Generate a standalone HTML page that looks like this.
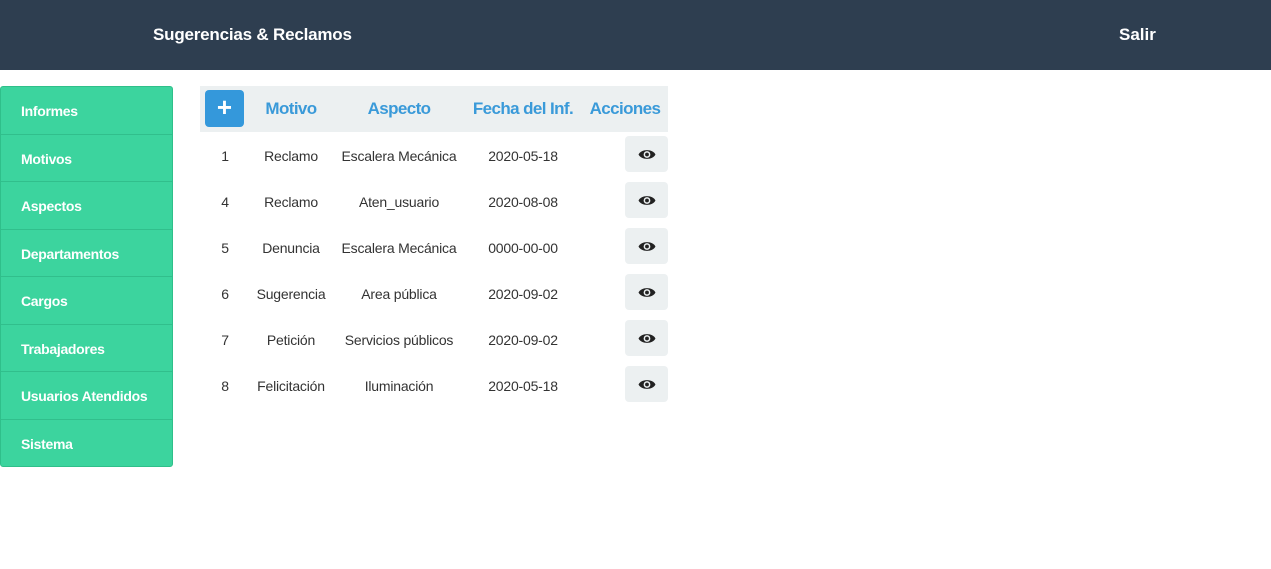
<!DOCTYPE html>
<html><head><style>
*{margin:0;padding:0;box-sizing:border-box}
body{width:1271px;height:569px;background:#fff;font-family:"Liberation Sans",sans-serif;position:relative;overflow:hidden}
.top{position:absolute;left:0;top:0;width:1271px;height:70px;background:#2e3e50;color:#fff;font-weight:bold;font-size:17px}
.top .t{position:absolute;left:153px;top:25px;letter-spacing:-0.2px}
.top .s{position:absolute;left:1119px;top:25px}
.side{position:absolute;left:0;top:86px;width:173px;height:381px;background:#3cd49e;border:1px solid #2fbf8a;border-radius:3px}
.side div{height:47.5px;border-bottom:1px solid #31bf8c;color:#fff;font-weight:bold;font-size:14px;padding-left:20px;line-height:48px;letter-spacing:-0.3px;white-space:nowrap}
.side div:last-child{border-bottom:none}
.tbl{position:absolute;left:200px;top:86px;width:468px}
.row{position:relative;height:46px}
.hd{background:#ecf0f1;height:46px}
.c{position:absolute;top:1px;height:46px;line-height:46px;text-align:center;font-size:14px;color:#333;white-space:nowrap;letter-spacing:-0.2px}
.hd .c{color:#3a9ad9;font-weight:bold;font-size:17px;letter-spacing:-0.6px;top:0}
.c1{left:0;width:50px}.c2{left:50px;width:82px}.c3{left:132px;width:134px}.c4{left:266px;width:114px}.c5{left:380px;width:88px}
.plus{position:absolute;left:5px;top:4px;width:39px;height:37px;background:#3498db;border-radius:4px;color:#fff;font-size:26px;font-weight:bold;line-height:35px;text-align:center}
.eye{position:absolute;right:0;top:4px;width:43px;height:36px;background:#ecf0f1;border-radius:4px;display:flex;align-items:center;justify-content:center}
</style></head><body>
<div class="top"><span class="t">Sugerencias &amp; Reclamos</span><span class="s">Salir</span></div>
<div class="side"><div>Informes</div><div>Motivos</div><div>Aspectos</div><div>Departamentos</div><div>Cargos</div><div>Trabajadores</div><div>Usuarios Atendidos</div><div>Sistema</div></div>
<div class="tbl">
<div class="row hd"><div class="plus">+</div><div class="c c2">Motivo</div><div class="c c3">Aspecto</div><div class="c c4" style="left:266px;width:114px">Fecha del Inf.</div><div class="c c5" style="left:384px;width:82px">Acciones</div></div>
<div class="row"><div class="c c1">1</div><div class="c c2">Reclamo</div><div class="c c3">Escalera Mecánica</div><div class="c c4">2020-05-18</div><div class="eye"><svg width="18" height="13" viewBox="0 0 17 12"><path d="M0.5 6C3 0.5 14 0.5 16.5 6C14 11.5 3 11.5 0.5 6Z" fill="#222"/><circle cx="8.5" cy="6" r="3.2" fill="#ecf0f1"/><circle cx="8.5" cy="6" r="1.8" fill="#222"/></svg></div></div>
<div class="row"><div class="c c1">4</div><div class="c c2">Reclamo</div><div class="c c3">Aten_usuario</div><div class="c c4">2020-08-08</div><div class="eye"><svg width="18" height="13" viewBox="0 0 17 12"><path d="M0.5 6C3 0.5 14 0.5 16.5 6C14 11.5 3 11.5 0.5 6Z" fill="#222"/><circle cx="8.5" cy="6" r="3.2" fill="#ecf0f1"/><circle cx="8.5" cy="6" r="1.8" fill="#222"/></svg></div></div>
<div class="row"><div class="c c1">5</div><div class="c c2">Denuncia</div><div class="c c3">Escalera Mecánica</div><div class="c c4">0000-00-00</div><div class="eye"><svg width="18" height="13" viewBox="0 0 17 12"><path d="M0.5 6C3 0.5 14 0.5 16.5 6C14 11.5 3 11.5 0.5 6Z" fill="#222"/><circle cx="8.5" cy="6" r="3.2" fill="#ecf0f1"/><circle cx="8.5" cy="6" r="1.8" fill="#222"/></svg></div></div>
<div class="row"><div class="c c1">6</div><div class="c c2">Sugerencia</div><div class="c c3">Area pública</div><div class="c c4">2020-09-02</div><div class="eye"><svg width="18" height="13" viewBox="0 0 17 12"><path d="M0.5 6C3 0.5 14 0.5 16.5 6C14 11.5 3 11.5 0.5 6Z" fill="#222"/><circle cx="8.5" cy="6" r="3.2" fill="#ecf0f1"/><circle cx="8.5" cy="6" r="1.8" fill="#222"/></svg></div></div>
<div class="row"><div class="c c1">7</div><div class="c c2">Petición</div><div class="c c3">Servicios públicos</div><div class="c c4">2020-09-02</div><div class="eye"><svg width="18" height="13" viewBox="0 0 17 12"><path d="M0.5 6C3 0.5 14 0.5 16.5 6C14 11.5 3 11.5 0.5 6Z" fill="#222"/><circle cx="8.5" cy="6" r="3.2" fill="#ecf0f1"/><circle cx="8.5" cy="6" r="1.8" fill="#222"/></svg></div></div>
<div class="row"><div class="c c1">8</div><div class="c c2">Felicitación</div><div class="c c3">Iluminación</div><div class="c c4">2020-05-18</div><div class="eye"><svg width="18" height="13" viewBox="0 0 17 12"><path d="M0.5 6C3 0.5 14 0.5 16.5 6C14 11.5 3 11.5 0.5 6Z" fill="#222"/><circle cx="8.5" cy="6" r="3.2" fill="#ecf0f1"/><circle cx="8.5" cy="6" r="1.8" fill="#222"/></svg></div></div>
</div>
</body></html>
